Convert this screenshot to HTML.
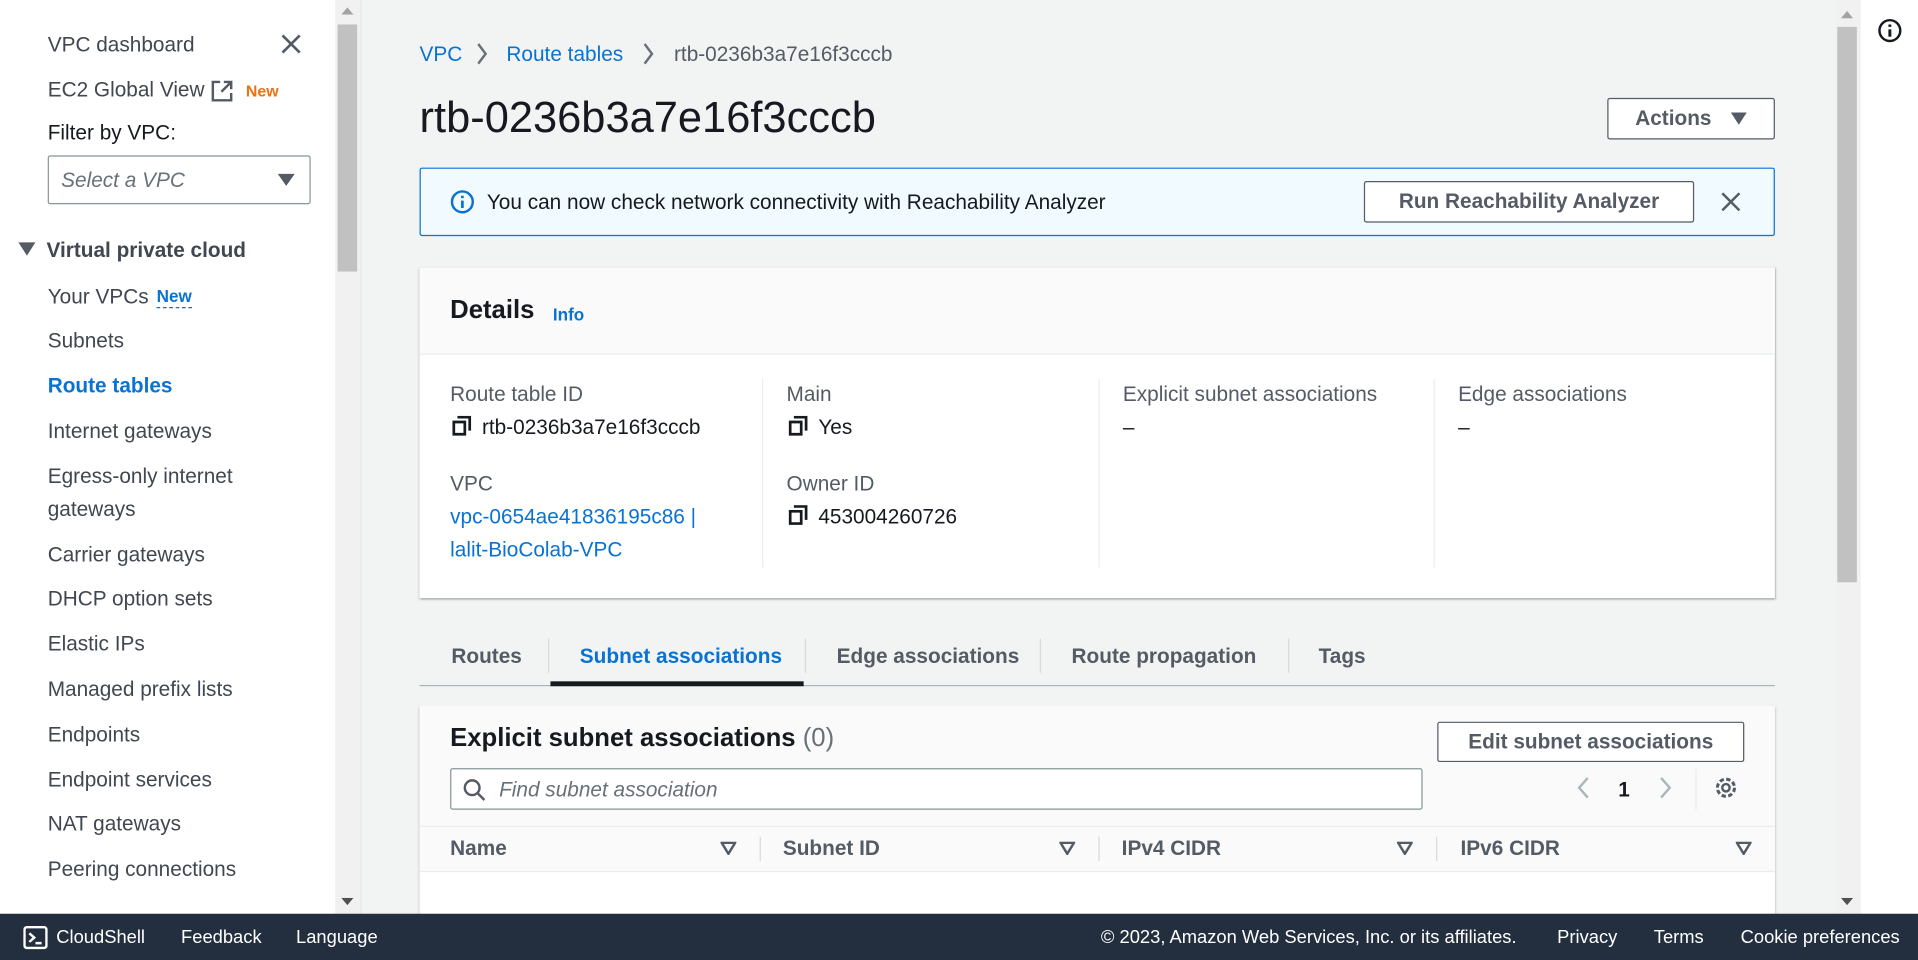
<!DOCTYPE html>
<html><head><meta charset="utf-8"><style>
*{box-sizing:border-box;margin:0;padding:0}
html,body{width:1918px;height:960px;overflow:hidden;background:#fff}
#w{width:1568px;height:785px;transform:scale(1.22321);transform-origin:0 0;position:relative;font-family:"Liberation Sans",sans-serif;color:#16191f;font-size:17px}
.a{position:absolute;white-space:nowrap}
.sb{color:#414750}
.lnk{color:#0972d3}
.btn{position:absolute;border:1px solid #545b64;border-radius:2px;background:#fff;font-weight:bold;color:#545b64;display:flex;align-items:center;justify-content:center;font-size:17px}
.lab{color:#545b64}
.vd{position:absolute;width:1px;background:#eaeded}
.f{color:#fff;font-size:15px;top:758px}
</style></head><body><div id="w">
<div class="a" style="left:0;top:0;width:274px;height:747px;background:#fff"></div>
<div class="a sb" style="left:39px;top:27px">VPC dashboard</div>
<svg class="a" style="left:229px;top:27px" width="18" height="18"><path d="M2 2L16 16M16 2L2 16" stroke="#545b64" stroke-width="2.2"/></svg>
<div class="a sb" style="left:39px;top:64px">EC2 Global View</div>
<svg class="a" style="left:172px;top:65px" width="19" height="19"><path d="M8 2H2v15h15v-6M11 2h6v6M17 2L9 10" stroke="#545b64" stroke-width="2" fill="none"/></svg>
<div class="a" style="left:201px;top:67px;color:#ec7211;font-size:13px;font-weight:bold">New</div>
<div class="a" style="left:39px;top:99px">Filter by VPC:</div>
<div class="a" style="left:39px;top:127px;width:215px;height:40px;border:1px solid #879596;border-radius:2px"></div>
<div class="a" style="left:50px;top:138px;font-style:italic;color:#687078">Select a VPC</div>
<svg class="a" style="left:227px;top:142px" width="14" height="10"><path d="M0 0h14L7 10z" fill="#545b64"/></svg>
<svg class="a" style="left:15px;top:198px" width="14" height="11"><path d="M0 0h14L7 11z" fill="#545b64"/></svg>
<div class="a" style="left:38px;top:195px;font-weight:bold;color:#414750">Virtual private cloud</div>
<div class="a sb" style="left:39px;top:233px">Your VPCs</div>
<div class="a lnk" style="left:128px;top:234px;font-size:14px;font-weight:bold;border-bottom:1px dashed #0972d3;line-height:17px">New</div>
<div class="a sb" style="left:39px;top:269px">Subnets</div>
<div class="a lnk" style="left:39px;top:306px;font-weight:bold">Route tables</div>
<div class="a sb" style="left:39px;top:343px">Internet gateways</div>
<div class="a sb" style="left:39px;top:380px">Egress-only internet</div>
<div class="a sb" style="left:39px;top:407px">gateways</div>
<div class="a sb" style="left:39px;top:444px">Carrier gateways</div>
<div class="a sb" style="left:39px;top:480px">DHCP option sets</div>
<div class="a sb" style="left:39px;top:517px">Elastic IPs</div>
<div class="a sb" style="left:39px;top:554px">Managed prefix lists</div>
<div class="a sb" style="left:39px;top:591px">Endpoints</div>
<div class="a sb" style="left:39px;top:628px">Endpoint services</div>
<div class="a sb" style="left:39px;top:664px">NAT gateways</div>
<div class="a sb" style="left:39px;top:701px">Peering connections</div>
<div class="a" style="left:274px;top:0;width:20px;height:747px;background:#f1f1f1"></div>
<div class="a" style="left:276px;top:20px;width:16px;height:202px;background:#c1c1c1"></div>
<svg class="a" style="left:279px;top:6px" width="10" height="6"><path d="M0 6h10L5 0z" fill="#a3a3a3"/></svg>
<svg class="a" style="left:279px;top:734px" width="10" height="6"><path d="M0 0h10L5 6z" fill="#505050"/></svg>
<div class="a" style="left:294px;top:0;width:2px;height:747px;background:#eaeded"></div>
<div class="a" style="left:296px;top:0;width:1204px;height:747px;background:#f2f3f3"></div>
<div class="a" style="left:343px;top:35px"><span class="lnk">VPC</span></div>
<svg class="a" style="left:389px;top:35px" width="10" height="18"><path d="M2 1l6 8-6 8" stroke="#687078" stroke-width="2" fill="none"/></svg>
<div class="a lnk" style="left:414px;top:35px">Route tables</div>
<svg class="a" style="left:525px;top:35px" width="10" height="18"><path d="M2 1l6 8-6 8" stroke="#687078" stroke-width="2" fill="none"/></svg>
<div class="a" style="left:551px;top:35px;color:#545b64">rtb-0236b3a7e16f3cccb</div>
<div class="a" style="left:343px;top:76px;font-size:35.5px">rtb-0236b3a7e16f3cccb</div>
<div class="btn" style="left:1314px;top:80px;width:137px;height:34px">Actions<svg style="margin-left:16px" width="13" height="10"><path d="M0 0h13L6.5 10z" fill="#545b64"/></svg></div>
<div class="a" style="left:343px;top:137px;width:1108px;height:56px;background:#f1faff;border:1px solid #0972d3;border-radius:2px"></div>
<svg class="a" style="left:368px;top:155px" width="20" height="20"><circle cx="10" cy="10" r="8.5" stroke="#0972d3" stroke-width="2" fill="none"/><path d="M10 9v6M10 5v2" stroke="#0972d3" stroke-width="2.2"/></svg>
<div class="a" style="left:398px;top:156px;color:#16191f">You can now check network connectivity with Reachability Analyzer</div>
<div class="btn" style="left:1115px;top:148px;width:270px;height:34px">Run Reachability Analyzer</div>
<svg class="a" style="left:1407px;top:157px" width="16" height="16"><path d="M1 1L15 15M15 1L1 15" stroke="#545b64" stroke-width="2"/></svg>
<div class="a" style="left:343px;top:218px;width:1108px;height:271px;background:#fff;box-shadow:0 1px 2px rgba(0,28,36,.3),1px 1px 1px rgba(0,28,36,.15);border-top:1px solid #eaeded"></div>
<div class="a" style="left:343px;top:219px;width:1108px;height:71px;background:#fafafa;border-bottom:1px solid #eaeded"></div>
<div class="a" style="left:368px;top:242px;font-size:21px;font-weight:bold">Details</div>
<div class="a lnk" style="left:452px;top:249px;font-size:14px;font-weight:bold">Info</div>
<div class="vd" style="left:623px;top:310px;height:154px"></div>
<div class="vd" style="left:898px;top:310px;height:154px"></div>
<div class="vd" style="left:1172px;top:310px;height:154px"></div>
<div class="a lab" style="left:368px;top:313px">Route table ID</div>
<svg class="a" style="left:369px;top:340px" width="17" height="17"><path d="M5 1h10v11M2 5h9v10H2z" stroke="#16191f" stroke-width="2.2" fill="none"/></svg>
<div class="a" style="left:394px;top:340px">rtb-0236b3a7e16f3cccb</div>
<div class="a lab" style="left:368px;top:386px">VPC</div>
<div class="a lnk" style="left:368px;top:413px">vpc-0654ae41836195c86 |</div>
<div class="a lnk" style="left:368px;top:440px">lalit-BioColab-VPC</div>
<div class="a lab" style="left:643px;top:313px">Main</div>
<svg class="a" style="left:644px;top:340px" width="17" height="17"><path d="M5 1h10v11M2 5h9v10H2z" stroke="#16191f" stroke-width="2.2" fill="none"/></svg>
<div class="a" style="left:669px;top:340px">Yes</div>
<div class="a lab" style="left:643px;top:386px">Owner ID</div>
<svg class="a" style="left:644px;top:413px" width="17" height="17"><path d="M5 1h10v11M2 5h9v10H2z" stroke="#16191f" stroke-width="2.2" fill="none"/></svg>
<div class="a" style="left:669px;top:413px">453004260726</div>
<div class="a lab" style="left:918px;top:313px">Explicit subnet associations</div>
<div class="a" style="left:918px;top:340px">–</div>
<div class="a lab" style="left:1192px;top:313px">Edge associations</div>
<div class="a" style="left:1192px;top:340px">–</div>
<div class="a" style="left:343px;top:560px;width:1108px;height:1px;background:#aab7b8"></div>
<div class="a" style="left:450px;top:557px;width:207px;height:4px;background:#16191f"></div>
<div class="vd" style="left:448px;top:522px;height:28px;background:#d5dbdb"></div>
<div class="vd" style="left:658px;top:522px;height:28px;background:#d5dbdb"></div>
<div class="vd" style="left:850px;top:522px;height:28px;background:#d5dbdb"></div>
<div class="vd" style="left:1053px;top:522px;height:28px;background:#d5dbdb"></div>
<div class="a" style="left:369px;top:527px;font-weight:bold;color:#545b64">Routes</div>
<div class="a lnk" style="left:474px;top:527px;font-weight:bold">Subnet associations</div>
<div class="a" style="left:684px;top:527px;font-weight:bold;color:#545b64">Edge associations</div>
<div class="a" style="left:876px;top:527px;font-weight:bold;color:#545b64">Route propagation</div>
<div class="a" style="left:1078px;top:527px;font-weight:bold;color:#545b64">Tags</div>
<div class="a" style="left:343px;top:577px;width:1108px;height:180px;background:#fff;box-shadow:0 1px 2px rgba(0,28,36,.3)"></div>
<div class="a" style="left:343px;top:577px;width:1108px;height:136px;background:#fafafa;border-bottom:1px solid #eaeded"></div>
<div class="a" style="left:343px;top:675px;width:1108px;height:1px;background:#eaeded"></div>
<div class="a" style="left:368px;top:592px;font-size:21px;font-weight:bold">Explicit subnet associations <span style="font-weight:normal;color:#687078">(0)</span></div>
<div class="btn" style="left:1175px;top:590px;width:251px;height:33px">Edit subnet associations</div>
<div class="a" style="left:368px;top:628px;width:795px;height:34px;background:#fff;border:1px solid #879596;border-radius:2px"></div>
<svg class="a" style="left:378px;top:636px" width="20" height="20"><circle cx="8" cy="8" r="6" stroke="#545b64" stroke-width="2" fill="none"/><path d="M12.5 12.5L18 18" stroke="#545b64" stroke-width="2"/></svg>
<div class="a" style="left:408px;top:636px;font-style:italic;color:#687078">Find subnet association</div>
<svg class="a" style="left:1288px;top:634px" width="12" height="20"><path d="M10 2L3 10l7 8" stroke="#aab7b8" stroke-width="2" fill="none"/></svg>
<div class="a" style="left:1323px;top:636px;font-weight:bold">1</div>
<svg class="a" style="left:1356px;top:634px" width="12" height="20"><path d="M2 2l7 8-7 8" stroke="#aab7b8" stroke-width="2" fill="none"/></svg>
<div class="vd" style="left:1386px;top:628px;height:34px"></div>
<svg class="a" style="left:1400px;top:633px" width="22" height="22"><circle cx="11" cy="11" r="3" stroke="#545b64" stroke-width="2" fill="none"/><circle cx="11" cy="11" r="7" stroke="#545b64" stroke-width="2.5" fill="none" stroke-dasharray="3.5 2"/></svg>
<div class="a" style="left:368px;top:684px;font-weight:bold;color:#545b64">Name</div>
<div class="a" style="left:640px;top:684px;font-weight:bold;color:#545b64">Subnet ID</div>
<div class="a" style="left:917px;top:684px;font-weight:bold;color:#545b64">IPv4 CIDR</div>
<div class="a" style="left:1194px;top:684px;font-weight:bold;color:#545b64">IPv6 CIDR</div>
<svg class="a" style="left:589px;top:688px" width="13" height="11"><path d="M1 1h11L6.5 10z" stroke="#545b64" stroke-width="2" fill="none"/></svg>
<svg class="a" style="left:866px;top:688px" width="13" height="11"><path d="M1 1h11L6.5 10z" stroke="#545b64" stroke-width="2" fill="none"/></svg>
<svg class="a" style="left:1142px;top:688px" width="13" height="11"><path d="M1 1h11L6.5 10z" stroke="#545b64" stroke-width="2" fill="none"/></svg>
<svg class="a" style="left:1419px;top:688px" width="13" height="11"><path d="M1 1h11L6.5 10z" stroke="#545b64" stroke-width="2" fill="none"/></svg>
<div class="vd" style="left:621px;top:684px;height:20px;background:#d5dbdb"></div>
<div class="vd" style="left:898px;top:684px;height:20px;background:#d5dbdb"></div>
<div class="vd" style="left:1174px;top:684px;height:20px;background:#d5dbdb"></div>
<div class="a" style="left:1500px;top:0;width:20px;height:747px;background:#f1f1f1"></div>
<div class="a" style="left:1502px;top:22px;width:16px;height:454px;background:#c1c1c1"></div>
<svg class="a" style="left:1505px;top:9px" width="10" height="6"><path d="M0 6h10L5 0z" fill="#a3a3a3"/></svg>
<svg class="a" style="left:1505px;top:734px" width="10" height="6"><path d="M0 0h10L5 6z" fill="#505050"/></svg>
<div class="a" style="left:1520px;top:0;width:48px;height:747px;background:#fff;border-left:1px solid #eaeded"></div>
<svg class="a" style="left:1535px;top:15px" width="20" height="20"><circle cx="10" cy="10" r="8.5" stroke="#16191f" stroke-width="2" fill="none"/><path d="M10 9v6M10 5v2" stroke="#16191f" stroke-width="2.4"/></svg>
<div class="a" style="left:0;top:747px;width:1568px;height:38px;background:#232f3e"></div>
<svg class="a" style="left:19px;top:757px" width="20" height="19"><rect x="1" y="1" width="18" height="17" rx="2" stroke="#fff" stroke-width="2" fill="none"/><path d="M5 6l4 3.5L5 13M10 14h5" stroke="#fff" stroke-width="2" fill="none"/></svg>
<div class="a f" style="left:46px">CloudShell</div>
<div class="a f" style="left:148px">Feedback</div>
<div class="a f" style="left:242px">Language</div>
<div class="a f" style="left:900px">© 2023, Amazon Web Services, Inc. or its affiliates.</div>
<div class="a f" style="left:1273px">Privacy</div>
<div class="a f" style="left:1352px">Terms</div>
<div class="a f" style="left:1423px">Cookie preferences</div>
</div></body></html>
